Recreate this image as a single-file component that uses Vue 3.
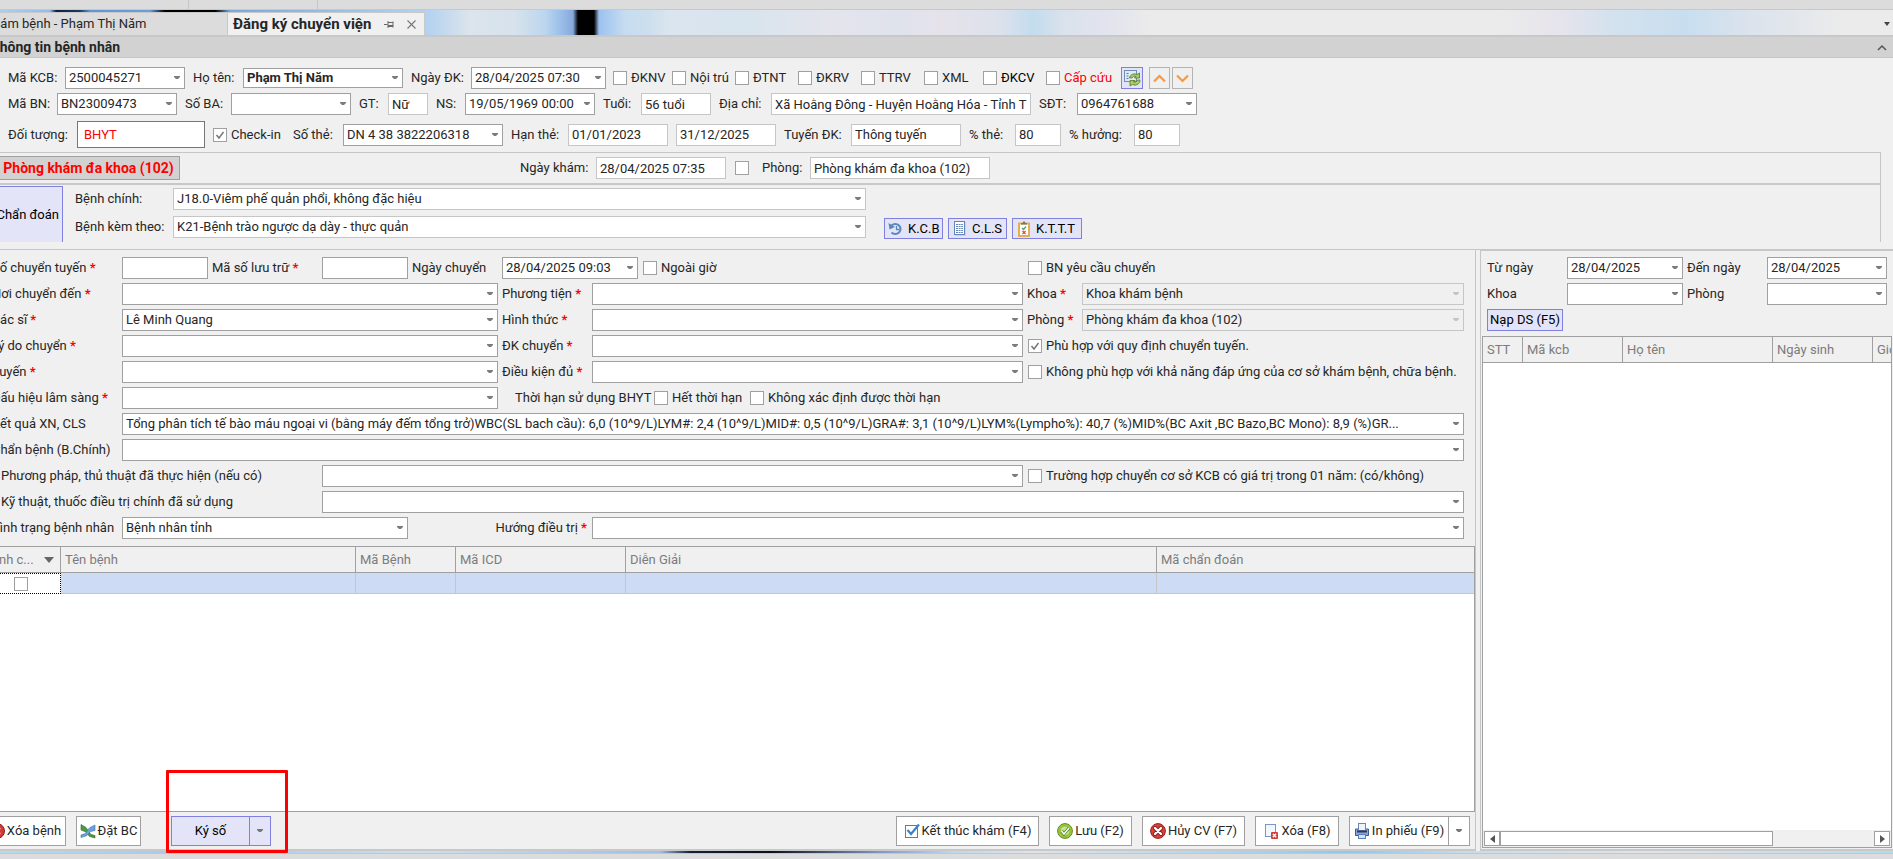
<script setup>
import { ref } from 'vue'

const flags = [
  { id: 'dknv', text: 'ĐKNV' },
  { id: 'noitru', text: 'Nội trú' },
  { id: 'dtnt', text: 'ĐTNT' },
  { id: 'dkrv', text: 'ĐKRV' },
  { id: 'ttrv', text: 'TTRV' },
  { id: 'xml', text: 'XML' },
  { id: 'dkcv', text: 'ĐKCV' },
  { id: 'capcuu', text: 'Cấp cứu', danger: true }
]

const transferRows = [
  { id: 'noi', label: 'Nơi chuyển đến', value: '', id2: 'phuongtien', label2: 'Phương tiện', right: 'khoa' },
  { id: 'bacsi', label: 'Bác sĩ', value: 'Lê Minh Quang', id2: 'hinhthuc', label2: 'Hình thức', right: 'phong' },
  { id: 'lydo', label: 'Lý do chuyển', value: '', id2: 'dkchuyen', label2: 'ĐK chuyển', right: 'fit' },
  { id: 'tuyen', label: 'Tuyến', value: '', id2: 'dieukien', label2: 'Điều kiện đủ', right: 'unfit' }
]

const fit = ref(true)
const unfit = ref(false)
const checkin = ref(true)
</script>

<template>
  <div class="app">
    <div class="topbar"><span></span><span></span></div>

    <nav class="tabs">
      <a class="tab" href="#kham"><span class="tab-text">Khám bệnh - Phạm Thị Năm</span></a>
      <div class="tab active">
        <a href="#chuyen" class="tab-title">Đăng ký chuyển viện</a>
        <button class="ghost" aria-label="Ghim">
          <svg width="10" height="9" viewBox="0 0 10 9"><path d="M0 4.500H3.500M4 1V8M4 2.500H9M4 5.500H9M4 6.500H9M9 1.500V7.500" fill="none" stroke="#666" stroke-width="1" /></svg>
        </button>
        <button class="ghost" aria-label="Đóng">
          <svg width="9" height="9" viewBox="0 0 9 9"><path d="M.5.5l8 8M8.500.5l-8 8" stroke="#777" stroke-width="1.100" fill="none" /></svg>
        </button>
      </div>
      <button class="ghost tab-menu" aria-label="Danh sách thẻ">
        <svg width="6" height="4" viewBox="0 0 6 4"><path d="M0 0h6L3 4z" fill="#444" /></svg>
      </button>
    </nav>

    <header class="group-head">
      <h1>Thông tin bệnh nhân</h1>
      <svg width="10" height="7" viewBox="0 0 10 7"><path d="M1 6l4-4 4 4" fill="none" stroke="#555" stroke-width="1.500" /></svg>
    </header>

    <section class="patient">
      <div class="prow prow1">
        <label for="makcb">Mã KCB:</label>
        <select id="makcb"><option>2500045271</option></select>
        <label for="hoten">Họ tên:</label>
        <select id="hoten" class="bold"><option>Phạm Thị Năm</option></select>
        <label for="ngaydk">Ngày ĐK:</label>
        <select id="ngaydk"><option>28/04/2025 07:30</option></select>
        <div class="flags">
          <label v-for="f in flags" :key="f.id" class="check" :class="{ danger: f.danger, strong: f.id === 'dkcv' }">
            <input type="checkbox" :id="f.id" />{{ f.text }}
          </label>
        </div>
        <div class="row-tools">
          <button class="tool blue" aria-label="Làm mới">
            <svg width="18" height="18" viewBox="0 0 18 18">
              <rect x="1.500" y="1.500" width="12" height="11" fill="#dfeaf8" stroke="#6f8fb5" />
              <path d="M3.500 4.500h2M3.500 7h2M3.500 9.500h2" stroke="#5a7ea8" />
              <path d="M6.500 9A5 4.500 0 0 1 14 5.500L16.500 4V9H11.500L13 7.500A3 3 0 0 0 9 9z" fill="#a9cf5c" stroke="#53752a" stroke-width=".8" />
              <path d="M17 11A5 4.500 0 0 1 9.500 15.500L7 17V11.500H12L10.500 13A3 3 0 0 0 14.500 11z" fill="#a9cf5c" stroke="#53752a" stroke-width=".8" />
            </svg>
          </button>
          <button class="tool" aria-label="Lên"><svg width="13" height="9" viewBox="0 0 13 9"><path d="M1 7.500L6.500 2 12 7.500" fill="none" stroke="#f29a45" stroke-width="2.200" /></svg></button>
          <button class="tool" aria-label="Xuống"><svg width="13" height="9" viewBox="0 0 13 9"><path d="M1 1.500L6.500 7 12 1.500" fill="none" stroke="#f29a45" stroke-width="2.200" /></svg></button>
        </div>
      </div>

      <div class="prow prow2">
        <label for="mabn">Mã BN:</label>
        <select id="mabn"><option>BN23009473</option></select>
        <label for="soba">Số BA:</label>
        <select id="soba"><option></option></select>
        <label for="gt">GT:</label>
        <input id="gt" class="soft" value="Nữ" />
        <label for="ns">NS:</label>
        <select id="ns"><option>19/05/1969 00:00</option></select>
        <label for="tuoi">Tuổi:</label>
        <input id="tuoi" class="soft" value="56 tuổi" />
        <label for="diachi">Địa chỉ:</label>
        <input id="diachi" class="soft" value="Xã Hoằng Đông - Huyện Hoằng Hóa - Tỉnh T" />
        <label for="sdt">SĐT:</label>
        <select id="sdt"><option>0964761688</option></select>
      </div>

      <div class="prow prow3">
        <label for="doituong">Đối tượng:</label>
        <input id="doituong" class="object" value="BHYT" />
        <label class="check checkin"><input type="checkbox" v-model="checkin" />Check-in</label>
        <label for="sothe">Số thẻ:</label>
        <select id="sothe"><option>DN 4 38 3822206318</option></select>
        <label for="hanthe">Hạn thẻ:</label>
        <input id="hanthe" class="soft" value="01/01/2023" />
        <span></span>
        <input class="soft" aria-label="Hạn thẻ đến" value="31/12/2025" />
        <label for="tuyendk">Tuyến ĐK:</label>
        <input id="tuyendk" class="soft" value="Thông tuyến" />
        <label for="pthe">% thẻ:</label>
        <input id="pthe" class="soft" value="80" />
        <label for="phuong">% hưởng:</label>
        <input id="phuong" class="soft" value="80" />
      </div>

      <div class="visit">
        <div class="room">
          <button class="room-btn">Phòng khám đa khoa (102)</button>
          <span></span>
          <label for="ngaykham">Ngày khám:</label>
          <input id="ngaykham" class="soft" value="28/04/2025 07:35" />
          <input type="checkbox" class="mid" aria-label="Chọn phòng" />
          <label for="phongkham">Phòng:</label>
          <input id="phongkham" class="soft" value="Phòng khám đa khoa (102)" />
        </div>
        <div class="diag">
          <button class="diag-btn">Chẩn đoán</button>
          <div class="diag-fields">
            <label for="benhchinh">Bệnh chính:</label>
            <select id="benhchinh" class="soft"><option>J18.0-Viêm phế quản phổi, không đặc hiệu</option></select>
            <label for="benhkem">Bệnh kèm theo:</label>
            <select id="benhkem" class="soft"><option>K21-Bệnh trào ngược dạ dày - thực quản</option></select>
          </div>
          <div class="diag-tools">
            <button class="blue">
              <svg width="16" height="16" viewBox="0 0 16 16"><path d="M3.500 4.500A5.300 5 0 1 1 3.500 11.500" fill="none" stroke="#5b88bb" stroke-width="2" /><path d="M.5 2L1.500 8.500 7 6z" fill="#5b88bb" /><path d="M8.500 5v3.500h3" fill="none" stroke="#5b88bb" stroke-width="1.300" /></svg>
              K.C.B
            </button>
            <button class="blue">
              <svg width="16" height="16" viewBox="0 0 16 16"><rect x="3" y="1" width="11" height="14" fill="#c9d5e6" /><rect x="2.500" y=".5" width="10" height="13" fill="#fff" stroke="#6485b8" /><path d="M4 3.500h7M4 5.500h7M4 7.500h7M4 9.500h7M4 11.500h7" stroke="#6485b8" stroke-dasharray="2 .6" /></svg>
              C.L.S
            </button>
            <button class="blue long">
              <svg width="16" height="16" viewBox="0 0 16 16"><rect x="3" y="2.500" width="10" height="12.500" fill="#fff" stroke="#e3b04f" stroke-width="2" /><path d="M5 3.500V2h2V.5h2V2h2v1.500z" fill="#777" /><path d="M6 7l1.500 1.500L10 5.500" fill="none" stroke="#4fa06a" stroke-width="1.200" /><path d="M6.500 10l3 3M9.500 10l-3 3" stroke="#e0443a" stroke-width="1.200" /></svg>
              K.T.T.T
            </button>
          </div>
        </div>
      </div>
    </section>

    <main class="body">
      <section class="left">
        <form class="form" @submit.prevent>
          <div class="frow f-first">
            <label for="sochuyen">Số chuyển tuyến <i>*</i></label>
            <input id="sochuyen" />
            <label for="masoluu">Mã số lưu trữ <i>*</i></label>
            <input id="masoluu" />
            <label for="ngaychuyen">Ngày chuyển</label>
            <select id="ngaychuyen"><option>28/04/2025 09:03</option></select>
            <label class="check inset"><input type="checkbox" />Ngoài giờ</label>
            <label class="check inset"><input type="checkbox" />BN yêu cầu chuyển</label>
          </div>

          <div v-for="r in transferRows" :key="r.id" class="frow f-pair">
            <label :for="r.id">{{ r.label }} <i>*</i></label>
            <select :id="r.id"><option>{{ r.value }}</option></select>
            <label :for="r.id2">{{ r.label2 }} <i>*</i></label>
            <select :id="r.id2"><option></option></select>
            <template v-if="r.right === 'khoa'">
              <label for="khoa">Khoa <i>*</i></label>
              <select id="khoa" disabled><option>Khoa khám bệnh</option></select>
            </template>
            <template v-else-if="r.right === 'phong'">
              <label for="phong">Phòng <i>*</i></label>
              <select id="phong" disabled><option>Phòng khám đa khoa (102)</option></select>
            </template>
            <label v-else-if="r.right === 'fit'" class="check inset wide"><input type="checkbox" v-model="fit" />Phù hợp với quy định chuyển tuyến.</label>
            <label v-else class="check inset wide"><input type="checkbox" v-model="unfit" />Không phù hợp với khả năng đáp ứng của cơ sở khám bệnh, chữa bệnh.</label>
          </div>

          <div class="frow f-sign">
            <label for="dauhieu">Dấu hiệu lâm sàng <i>*</i></label>
            <select id="dauhieu"><option></option></select>
            <span class="term">Thời hạn sử dụng BHYT</span>
            <label class="check"><input type="checkbox" />Hết thời hạn</label>
            <label class="check"><input type="checkbox" />Không xác định được thời hạn</label>
          </div>

          <div class="frow f-full">
            <label for="ketqua">Kết quả XN, CLS</label>
            <select id="ketqua"><option>Tổng phân tích tế bào máu ngoại vi (bằng máy đếm tổng trở)WBC(SL bach cầu): 6,0 (10^9/L)LYM#: 2,4 (10^9/L)MID#: 0,5 (10^9/L)GRA#: 3,1 (10^9/L)LYM%(Lympho%): 40,7 (%)MID%(BC Axit ,BC Bazo,BC Mono): 8,9 (%)GR...</option></select>
          </div>
          <div class="frow f-full">
            <label for="chanbenh">Chẩn bệnh (B.Chính)</label>
            <select id="chanbenh"><option></option></select>
          </div>
          <div class="frow f-method">
            <label for="phuongphap" class="shift">Phương pháp, thủ thuật đã thực hiện (nếu có)</label>
            <select id="phuongphap"><option></option></select>
            <label class="check inset"><input type="checkbox" />Trường hợp chuyển cơ sở KCB có giá trị trong 01 năm: (có/không)</label>
          </div>
          <div class="frow f-tech">
            <label for="kythuat" class="shift">Kỹ thuật, thuốc điều trị chính đã sử dụng</label>
            <select id="kythuat"><option></option></select>
          </div>
          <div class="frow f-state">
            <label for="tinhtrang">Tình trạng bệnh nhân</label>
            <select id="tinhtrang"><option>Bệnh nhân tỉnh</option></select>
            <label for="huong" class="end">Hướng điều trị <i>*</i></label>
            <select id="huong"><option></option></select>
          </div>
        </form>

        <div class="grid-box">
          <table class="diseases">
            <colgroup><col class="c1" /><col class="c2" /><col class="c3" /><col class="c4" /><col /><col class="c6" /></colgroup>
            <thead>
              <tr>
                <th><span class="sorted">Bệnh c...<svg width="10" height="6" viewBox="0 0 10 6"><path d="M0 0h10L5 6z" fill="#666" /></svg></span></th>
                <th>Tên bệnh</th><th>Mã Bệnh</th><th>Mã ICD</th><th>Diễn Giải</th><th>Mã chẩn đoán</th>
              </tr>
            </thead>
            <tbody>
              <tr><td class="focus"><input type="checkbox" aria-label="Bệnh chính" /></td><td></td><td></td><td></td><td></td><td></td></tr>
            </tbody>
          </table>
        </div>

        <footer class="actions">
          <button class="act xoa-benh">
            <svg width="16" height="16" viewBox="0 0 16 16"><circle cx="8" cy="8" r="7.500" fill="#cf3a35" stroke="#8f1f1c" /><path d="M5 5l6 6M11 5l-6 6" stroke="#fff" stroke-width="2.200" /></svg>
            Xóa bệnh
          </button>
          <button class="act dat">
            <svg width="16" height="16" viewBox="0 0 16 16"><path d="M1 1.500L6 4.500 8.500 8 11 11.500 15 12.500V15L9.500 13.500 6 9 1 7z" fill="#4d9a3f" stroke="#2f6b2a" stroke-width=".6" /><path d="M1 14.500V12L5.500 10.500 8 6.500 10 4.500 15 2V7.500L10.500 8.500 7 12.500z" fill="#69a3dc" stroke="#3b6ea8" stroke-width=".6" /></svg>
            Đặt BC
          </button>
          <div class="sign">
            <button class="blue">Ký số</button>
            <button class="blue drop" aria-label="Tùy chọn ký số"><svg width="6" height="4" viewBox="0 0 6 4"><path d="M0 0h6v1L4 3H2L0 1z" fill="#777" /></svg></button>
            <div class="mark"></div>
          </div>
          <span class="fill"></span>
          <button class="act w1">
            <svg width="16" height="16" viewBox="0 0 16 16"><rect x="1.500" y="2.500" width="12" height="12" fill="#fff" stroke="#777" /><path d="M3.500 7l3.500 4 8-9.500" fill="none" stroke="#3d82c4" stroke-width="2.200" /></svg>
            Kết thúc khám (F4)
          </button>
          <button class="act w2">
            <svg width="16" height="16" viewBox="0 0 16 16"><circle cx="8" cy="8" r="7.400" fill="#9ccb3b" stroke="#5d8a1c" /><circle cx="8" cy="8" r="5" fill="#c9e58a" stroke="#6f9c28" stroke-width=".6" /><path d="M4.500 8l2.500 3 5-6" fill="none" stroke="#4a7516" stroke-width="3" /><path d="M4.500 8l2.500 3 5-6" fill="none" stroke="#fff" stroke-width="1.600" /></svg>
            Lưu (F2)
          </button>
          <button class="act w3">
            <svg width="16" height="16" viewBox="0 0 16 16"><circle cx="8" cy="8" r="7.400" fill="#d8423b" stroke="#96211d" /><path d="M5 5l6 6M11 5l-6 6" stroke="#8a1714" stroke-width="4" stroke-linecap="round" /><path d="M5 5l6 6M11 5l-6 6" stroke="#fff" stroke-width="2.400" stroke-linecap="round" /></svg>
            Hủy CV (F7)
          </button>
          <button class="act w4">
            <svg width="16" height="16" viewBox="0 0 16 16"><rect x="2.500" y="1.500" width="10" height="12" fill="#f2f6fd" stroke="#7d95c4" /><rect x="8" y="9" width="7" height="7" rx="1" fill="#d23b33" /><path d="M9.800 10.800l3.400 3.400M13.200 10.800l-3.400 3.400" stroke="#fff" stroke-width="1.300" /></svg>
            Xóa (F8)
          </button>
          <div class="print">
            <button class="act w5">
              <svg width="16" height="16" viewBox="0 0 16 16"><path d="M1.500 6h13v6.500h-13z" fill="#8fa5d4" stroke="#43598f" /><rect x="4.500" y=".5" width="7" height="7" fill="#eef3fc" stroke="#6f87b8" /><path d="M3 8.500h10" stroke="#2c3a60" stroke-width="2" /><rect x="4.500" y="11.500" width="7" height="4" fill="#cfe6fa" stroke="#5b7fb8" /></svg>
              In phiếu (F9)
            </button>
            <button class="act drop" aria-label="Tùy chọn in"><svg width="6" height="4" viewBox="0 0 6 4"><path d="M0 0h6v1L4 3H2L0 1z" fill="#777" /></svg></button>
          </div>
        </footer>
      </section>

      <aside class="right">
        <div class="filter">
          <label for="tungay">Từ ngày</label>
          <select id="tungay"><option>28/04/2025</option></select>
          <label for="denngay" class="second">Đến ngày</label>
          <select id="denngay"><option>28/04/2025</option></select>
          <label for="khoa2">Khoa</label>
          <select id="khoa2"><option></option></select>
          <label for="phong2" class="second">Phòng</label>
          <select id="phong2"><option></option></select>
          <button class="blue load">Nạp DS (F5)</button>
        </div>
        <div class="list-box">
          <table class="list">
            <colgroup><col class="l1" /><col class="l2" /><col class="l3" /><col class="l4" /><col /></colgroup>
            <thead><tr><th>STT</th><th>Mã kcb</th><th>Họ tên</th><th>Ngày sinh</th><th>Giới</th></tr></thead>
          </table>
          <div class="scroll">
            <button aria-label="Cuộn trái"><svg width="5" height="8" viewBox="0 0 5 8"><path d="M5 0v8L0 4z" fill="#555" /></svg></button>
            <span class="thumb"></span>
            <span class="track"></span>
            <button aria-label="Cuộn phải"><svg width="5" height="8" viewBox="0 0 5 8"><path d="M0 0v8l5-4z" fill="#555" /></svg></button>
          </div>
        </div>
      </aside>
    </main>
    <div class="wall"></div>
    <div class="bottombar"></div>
  </div>
</template>

<style>
body { margin: 0; }
</style>

<style scoped>
.app {
  display: flex;
  flex-direction: column;
  height: 100vh;
  overflow: hidden;
  background: #f0f0f0;
  color: #262626;
  font-family: Roboto, Tahoma, sans-serif;
  font-size: 13px;
  line-height: 16px;
}
.app *, .app *::before { box-sizing: border-box; }
button, input, select { font: inherit; color: inherit; margin: 0; border-radius: 0; }
button { padding: 0; white-space: nowrap; color: #000; }
a { color: inherit; text-decoration: none; }
svg { display: block; flex: none; }
label { white-space: nowrap; }

input, select {
  width: 100%;
  min-width: 0;
  height: 22px;
  padding: 0 3px;
  border: 1px solid #a0a0a0;
  background-color: #fff;
  outline: 0;
}
select {
  appearance: none;
  padding-right: 18px;
  background-image: url("data:image/svg+xml,%3Csvg xmlns='http://www.w3.org/2000/svg' width='6' height='4'%3E%3Cpath d='M0 0h6v1L4 3H2L0 1z' fill='%237c7c7c'/%3E%3C/svg%3E");
  background-repeat: no-repeat;
  background-position: right 4px center;
}
.soft { border-color: #c6c6c6; }
select:disabled {
  opacity: 1;
  color: #262626;
  border-color: #c6c6c6;
  background-color: #f0f0f0;
  background-image: url("data:image/svg+xml,%3Csvg xmlns='http://www.w3.org/2000/svg' width='6' height='4'%3E%3Cpath d='M0 0h6v1L4 3H2L0 1z' fill='%23c4c4c4'/%3E%3C/svg%3E");
}
input[type='checkbox'] {
  appearance: none;
  flex: none;
  width: 14px;
  height: 14px;
  padding: 0;
}
input[type='checkbox']:checked {
  background-image: url("data:image/svg+xml,%3Csvg xmlns='http://www.w3.org/2000/svg' width='12' height='12'%3E%3Cpath d='M2.500 6l2.500 3 4.500-6' fill='none' stroke='%23777' stroke-width='1.500'/%3E%3C/svg%3E");
}
.check { display: flex; align-items: center; gap: 4px; }
.blue { border: 1px solid #8080e0; background: #e4e4f8; }
.ghost { border: 0; background: none; }

.topbar { flex: none; display: flex; height: 10px; border-bottom: 1px solid #c8c8c8; background: #dcdcdc; }
.topbar span { width: 189px; border-right: 1px solid #c6c6c6; }
.topbar span + span { width: 129px; }

.tabs {
  flex: none;
  display: flex;
  align-items: stretch;
  height: 27px;
  padding-top: 2px;
  border-bottom: 2px solid #c8c8c8;
  background: linear-gradient(90deg, #a9d0f0 0, #8fbdf0 50px, #10203c 56px, #1c3a68 80px, #5f95d8 90px, #6aa0e0 150px, #000 165px, #000 215px, #79a8dc 230px, #b5d3ef 430px, #dce4ec 470px, #d6e2ec 515px, #bcd6ee 545px, #9cc0ea 560px, #86a8dc 573px, #000 578px, #000 594px, #9cc2ee 599px, #c6dcf0 625px, #cddfee 650px, #dbe5ee 670px, #d8e4ee 740px, #e4e4ec 830px, #dfe3ec 900px, #e6e2ea 940px, #dce2ec 1000px, #c3dcee 1033px, #dbe2ec 1065px, #e2e4ee 1110px, #ebebeb 1150px, #ebebeb 1500px, #e6e4ec 1560px, #d4e2ee 1610px, #c8deef 1685px, #dbe3ec 1750px, #ebebeb 1840px);
}
.tab {
  display: flex;
  align-items: center;
  width: 227px;
  overflow: hidden;
  border-top: 1px solid #c8c8c8;
  background: #dcdcdc;
}
.tab-text { margin-left: -15px; white-space: nowrap; }
.tab.active { width: 198px; gap: 13px; padding-left: 5px; border-left: 1px solid #c8c8c8; border-right: 1px solid #c8c8c8; background: #f0f0f0; }
.tab-title { font-size: 15px; font-weight: 700; white-space: nowrap; }
.tab .ghost { flex: none; }
.tab-menu { margin-left: auto; padding-right: 3px; }

.group-head {
  flex: none;
  display: flex;
  align-items: center;
  justify-content: space-between;
  height: 21px;
  padding-right: 6px;
  border-bottom: 1px solid #c6c6c6;
  background: #d2d2d2;
}
.group-head h1 { margin: 0 0 0 -9px; font-size: 14px; line-height: 16px; font-weight: 700; }

.patient { flex: none; padding-top: 9px; border-bottom: 1px solid #c6c6c6; }
.prow { display: grid; align-items: center; height: 22px; margin-bottom: 4px; }
.prow > label { padding-left: 8px; }
.prow1 { grid-template-columns: 65px 120px 58px 160px 68px 135px auto 1fr; }
.prow2 { grid-template-columns: 57px 120px 54px 120px 37px 40px 37px 130px 46px 70px 60px 260px 46px 120px; margin-bottom: 6px; }
.prow3 { grid-template-columns: 77px 128px 80px 58px 160px 65px 100px 8px 100px 75px 110px 54px 46px 73px 46px; height: 27px; }
.flags { display: grid; grid-template-columns: 59px 63px 63px 63px 63px 59px 63px 75px; padding-left: 7px; }
.row-tools { display: flex; gap: 2px; }
.tool { display: grid; place-items: center; width: 21px; height: 22px; border: 1px solid #b4b4b4; background: #f0f0f0; }
.tool.blue { width: 22px; margin-right: 4px; border-color: #8080e0; background: #e4e4f8; }
.bold { height: 20px; font-weight: 700; }
.danger { color: #f00; }
.strong { color: #000; }
.object { height: 27px; padding-left: 6px; border-color: #777; color: #f00; }

.visit { margin-right: 12px; border-top: 1px solid #c6c6c6; border-right: 1px solid #c6c6c6; margin-bottom: 7px; }
.room {
  display: grid;
  grid-template-columns: 180px 332px 84px 130px 28px 56px 180px;
  align-items: center;
  height: 32px;
  border-bottom: 2px solid #c8c8c8;
}
.room label { padding-left: 8px; }
.room-btn { height: 24px; padding-right: 2px; border: 1px solid #a0a0a0; border-left: 0; background: #d2d2d2; color: #f00; font-size: 14px; font-weight: 700; }
.mid { margin-left: 9px; }
.diag { display: flex; height: 57px; padding-top: 1px; }
.diag-btn { width: 73px; margin-left: -10px; padding-right: 3px; border: solid #8080e0; border-width: 1px 1px 0 0; background: #e4e4f8; text-align: right; }
.diag-fields { display: grid; grid-template-columns: 110px 693px; grid-auto-rows: 22px; row-gap: 6px; padding-top: 2px; align-items: center; }
.diag-fields label { padding-left: 12px; }
.diag-tools { display: flex; gap: 5px; padding: 32px 0 0 18px; }
.diag-tools button { display: flex; align-items: center; gap: 4px; width: 59px; height: 21px; padding-left: 3px; }
.diag-tools .long { width: 70px; }

.body { flex: 1; display: flex; gap: 4px; min-height: 0; }
.left { flex: 1; min-width: 0; display: flex; flex-direction: column; border-right: 1px solid #c6c6c6; }
.form { display: grid; gap: 4px; padding: 7px 11px 7px 0; margin-left: -8px; }
.frow { display: grid; align-items: center; height: 22px; }
.frow > label + select ~ label, .frow > label + input ~ label { padding-left: 4px; }
.frow > label.inset { padding-left: 5px; }
.frow > label.end { padding-left: 0; }
.f-first { grid-template-columns: 130px 86px 114px 86px 94px 136px minmax(0, 1fr) 441px; }
.f-pair { grid-template-columns: 130px 376px 94px minmax(0, 1fr) 59px 382px; }
.f-sign { grid-template-columns: 130px 376px 152px 96px auto; }
.f-full { grid-template-columns: 130px minmax(0, 1fr); }
.f-method { grid-template-columns: 330px minmax(0, 1fr) 441px; }
.f-tech { grid-template-columns: 330px minmax(0, 1fr); }
.f-state { grid-template-columns: 130px 286px 184px minmax(0, 1fr); }
.wide { grid-column: span 2; }
.shift { padding-left: 9px; }
.term { padding-left: 17px; white-space: nowrap; }
.end { text-align: right; padding-right: 5px; }
.frow i { color: #f00; font-style: normal; font-weight: 700; }

.grid-box { flex: 1; min-height: 0; overflow: hidden; border: 1px solid #a0a0a0; border-left: 0; background: #fff; }
table { border-collapse: separate; border-spacing: 0; table-layout: fixed; }
th { height: 26px; padding: 0 4px; border-right: 1px solid #a0a0a0; border-bottom: 1px solid #a0a0a0; background: #f0f0f0; color: #7c7c7c; font-weight: 400; text-align: left; white-space: nowrap; overflow: hidden; }
th:last-child, td:last-child { border-right: 0; }
.diseases { width: calc(100% + 20px); margin-left: -20px; }
.c1 { width: 81px; }
.c2 { width: 295px; }
.c3 { width: 100px; }
.c4 { width: 170px; }
.c6 { width: 317px; }
.sorted { display: flex; align-items: center; justify-content: space-between; padding-right: 2px; }
td { height: 21px; padding: 0; border-right: 1px solid #c6c6c6; border-bottom: 1px solid #c6c6c6; background: #cddbf5; }
td.focus { border: 1px dotted #000; background: #fff; }
td.focus input { display: block; margin: 0 auto; }

.actions { flex: none; display: flex; gap: 10px; margin-left: -16px; padding: 4px 5px 3px 0; border-bottom: 2px solid #c8c8c8; }
.actions button { display: flex; align-items: center; justify-content: center; gap: 2px; height: 30px; }
.act { border: 1px solid #a0a0a0; background: #fff; color: #262626; }
.xoa-benh { width: 82px; }
.dat { width: 65px; }
.sign { position: relative; display: flex; margin-left: 20px; }
.sign .blue:first-child { width: 79px; }
.sign .blue.drop { width: 22px; margin-left: -1px; }
.mark { position: absolute; inset: -46px -17px -7px -5px; border: 3px solid #f00; border-radius: 1px; pointer-events: none; }
.fill { flex: 1; }
.w1 { width: 143px; }
.w2 { width: 83px; }
.w3 { width: 103px; }
.w4 { width: 84px; }
.w5 { width: 100px; }
.print { display: flex; }
.print .drop { width: 22px; margin-left: -1px; }

.right { width: 413px; flex: none; display: flex; flex-direction: column; padding: 0 1px 1px 1px; border-top: 1px solid #c8c8c8; border-left: 1px solid #c6c6c6; border-bottom: 2px solid #c8c8c8; }
.filter { display: grid; grid-template-columns: 80px 116px 84px 120px; gap: 4px 0; align-items: center; padding: 6px 0 5px 5px; }
.second { padding-left: 4px; }
.load { width: 76px; height: 22px; }
.list-box { flex: 1; display: flex; flex-direction: column; min-height: 0; border: 1px solid #a0a0a0; background: #fff; }
.list { width: 100%; }
.l1 { width: 40px; }
.l2 { width: 100px; }
.l3 { width: 150px; }
.l4 { width: 100px; }
.list th { text-overflow: clip; }
.scroll { display: flex; height: 17px; margin-top: auto; padding: 1px; background: #f0f0f0; }
.scroll button { display: grid; place-items: center; width: 16px; height: 15px; border: 1px solid #a0a0a0; background: #fff; }
.thumb { flex: 273; border: 1px solid #a0a0a0; background: #fff; }
.track { flex: 102; }

.wall { flex: none; height: 2px; background: linear-gradient(90deg, #b8daf0 0, #a4c8ea 200px, #c8e0f2 420px, #9fc0e4 660px, #14203a 690px, #0a0f1c 770px, #7f98c8 880px, #b8d8f0 950px, #dfe4ea 1030px, #c0dcf0 1150px, #8cc8f0 1350px, #c5def0 1470px, #dfe4ea 1650px, #b5daf0 1893px); }
.bottombar { flex: none; height: 6px; border-top: 1px solid #c6c6c6; background: #dcdcdc; }
</style>
